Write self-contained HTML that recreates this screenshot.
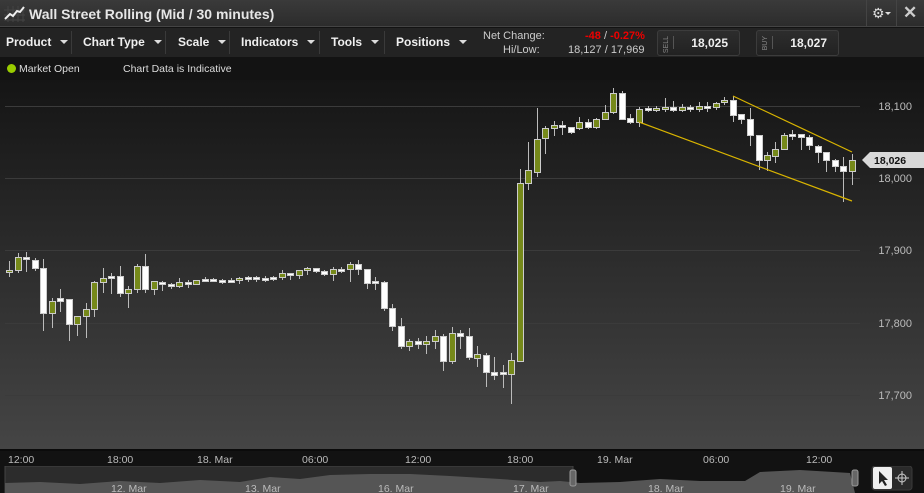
<!DOCTYPE html>
<html><head><meta charset="utf-8">
<style>
*{margin:0;padding:0;box-sizing:border-box}
body{width:924px;height:493px;overflow:hidden;background:#131313;font-family:"Liberation Sans",Arial,sans-serif;position:relative}
.title{position:absolute;left:0;top:0;width:924px;height:27px;background:linear-gradient(#3a3a3a,#2c2c2c);border-bottom:1px solid #444}
.title .t{position:absolute;left:29px;top:6px;color:#e6e6e6;font-size:14px;font-weight:bold}
.menu{position:absolute;left:0;top:28px;width:924px;height:29px;background:#232323}
.mi{position:absolute;top:7px;color:#f0f0f0;font-size:12px;font-weight:bold}
.sep{position:absolute;top:3px;width:1px;height:23px;background:#3a3a3a}
.arr{display:inline-block;width:0;height:0;border-left:4px solid transparent;border-right:4px solid transparent;border-top:4px solid #ddd;margin-left:9px;vertical-align:2px}
.lbl{position:absolute;color:#ccc;font-size:11px}
.btn{position:absolute;top:30px;height:26px;border:1px solid #3c3c3c;border-radius:3px;background:linear-gradient(#2d2d2d,#222)}
.btn .s{position:absolute;left:5px;top:5px;color:#888;font-size:7px;writing-mode:vertical-rl;transform:rotate(180deg);letter-spacing:0px}
.btn .bar{position:absolute;left:15px;top:5px;width:1px;height:13px;background:#555}
.btn .v{position:absolute;right:11px;top:5px;color:#eee;font-size:12px;font-weight:bold}
.status{position:absolute;left:0;top:57px;width:924px;height:23px;background:#131313}
.chart{position:absolute;left:0;top:80px;width:924px;height:369px;background:linear-gradient(#151515,#454545)}
.xaxis{position:absolute;left:0;top:449px;width:924px;height:17px;background:#121212;border-top:2px solid #0b0b0b}
.xl{position:absolute;top:3px;color:#bbb;font-size:10.5px}
.nav{position:absolute;left:0;top:466px;width:924px;height:27px;background:#121212}
</style></head><body>
<div class="title">
<svg style="position:absolute;left:3px;top:5px" width="22" height="17"><g stroke="#444" stroke-width="1"><path d="M5 1V17M10 1V17M15 1V17M20 1V17M1 5H22M1 10H22M1 15H22"/></g><path d="M2 14L7 9L10 11L14 6L17 7L21 2" stroke="#eee" stroke-width="2" fill="none"/></svg>
<div class="t">Wall Street Rolling (Mid / 30 minutes)</div>
<div style="position:absolute;left:866px;top:0;width:1px;height:27px;background:#444"></div>
<div style="position:absolute;left:896px;top:0;width:1px;height:27px;background:#444"></div>
<div style="position:absolute;left:872px;top:5px;color:#ddd;font-size:14px">⚙</div>
<div style="position:absolute;left:885px;top:12px;border-left:3px solid transparent;border-right:3px solid transparent;border-top:3px solid #ddd"></div>
<div style="position:absolute;left:903px;top:3px;color:#ccc;font-size:17px;font-weight:bold">✕</div>
</div>
<div class="menu">
<div class="mi" style="left:6px">Product<span class="arr"></span></div><div class="sep" style="left:71px"></div>
<div class="mi" style="left:83px">Chart Type<span class="arr"></span></div><div class="sep" style="left:165px"></div>
<div class="mi" style="left:178px">Scale<span class="arr"></span></div><div class="sep" style="left:229px"></div>
<div class="mi" style="left:241px">Indicators<span class="arr"></span></div><div class="sep" style="left:319px"></div>
<div class="mi" style="left:331px">Tools<span class="arr"></span></div><div class="sep" style="left:384px"></div>
<div class="mi" style="left:396px">Positions<span class="arr"></span></div>
<div class="lbl" style="left:483px;top:2px">Net Change:</div>
<div class="lbl" style="left:503px;top:16px">Hi/Low:</div>
<div class="lbl" style="left:585px;top:2px;color:#e00;font-weight:bold">-48 <span style="color:#ccc;font-weight:normal">/</span> -0.27%</div>
<div class="lbl" style="left:568px;top:16px">18,127 / 17,969</div>
</div>
<div class="btn" style="left:657px;width:83px"><span class="s">SELL</span><span class="bar"></span><span class="v">18,025</span></div>
<div class="btn" style="left:756px;width:83px"><span class="s">BUY</span><span class="bar"></span><span class="v">18,027</span></div>
<div class="status">
<div style="position:absolute;left:7px;top:7px;width:9px;height:9px;border-radius:50%;background:#9c0"></div>
<div style="position:absolute;left:19px;top:6px;color:#ddd;font-size:10.5px">Market Open</div>
<div style="position:absolute;left:123px;top:6px;color:#ddd;font-size:10.5px">Chart Data is Indicative</div>
</div>
<div class="chart"></div>
<svg id="c" style="position:absolute;left:0;top:0" width="924" height="449"></svg>
<div class="xaxis">
<span class="xl" style="left:8px">12:00</span><span class="xl" style="left:107px">18:00</span><span class="xl" style="left:197px">18. Mar</span><span class="xl" style="left:302px">06:00</span><span class="xl" style="left:405px">12:00</span><span class="xl" style="left:507px">18:00</span><span class="xl" style="left:597px">19. Mar</span><span class="xl" style="left:703px">06:00</span><span class="xl" style="left:806px">12:00</span>
</div>
<div class="nav">
<svg width="924" height="27" style="position:absolute;left:0;top:0">
<rect x="5" y="0" width="568" height="27" fill="#2c2c2c" stroke="#444"/>
<path d="M5 27V17L40 16L80 18L120 15L160 17L200 14L240 16L270 11L300 13L330 9L370 8L410 8L450 10L500 13L540 16L560 15L580 17L620 16L660 13L700 15L745 15L760 6L800 4L850 7L855 27Z" fill="#555"/>
<g fill="#666" stroke="#999"><rect x="570" y="4" width="6" height="16" rx="2"/><rect x="852" y="4" width="6" height="16" rx="2"/></g>
<g font-size="10.5" fill="#bbb" font-family="Liberation Sans,sans-serif"><text x="111" y="26">12. Mar</text><text x="245" y="26">13. Mar</text><text x="378" y="26">16. Mar</text><text x="513" y="26">17. Mar</text><text x="648" y="26">18. Mar</text><text x="780" y="26">19. Mar</text></g>
<rect x="872" y="0" width="40" height="24" rx="3" fill="#2a2a2a" stroke="#3a3a3a"/>
<rect x="873" y="1" width="19" height="22" rx="2" fill="#eee"/>
<path d="M879 5L879 18L882 15L885 20L887 19L884 14L888 14Z" fill="#222"/>
<g stroke="#ccc" fill="none"><circle cx="902" cy="12" r="4"/><path d="M902 5V19M895 12H909"/></g>
</svg>
</div>
<script>
var s=document.getElementById('c'),h='';
[106,178,250,323,395].forEach(function(y){h+='<rect x="5" y="'+y+'" width="855" height="1" fill="#3b3b3b"/>';});
[['18,100',106],['18,000',178],['17,900',250],['17,800',323],['17,700',395]].forEach(function(a){h+='<text x="912" y="'+(a[1]+4)+'" text-anchor="end" font-size="11" fill="#bbb" font-family="Liberation Sans,sans-serif">'+a[0]+'</text>';});
var c=[[9,261,277,270,272,1],[18,253,273,257,270,1],[26,252,272,257,259,0],[35,258,271,260,268,0],[43,259,331,268,313,0],[52,298,328,301,313,1],[60,289,312,298,301,0],[69,299,341,299,324,0],[77,316,336,316,324,1],[86,303,338,309,316,1],[94,281,317,282,309,1],[103,268,293,278,282,1],[111,273,294,276,278,0],[120,266,297,276,293,0],[128,286,308,289,293,1],[137,264,293,266,289,1],[145,254,293,266,289,0],[154,281,295,281,289,1],[162,281,291,282,284,0],[171,283,289,284,286,0],[179,278,288,282,286,1],[188,280,288,282,284,0],[196,280,284,280,284,1],[205,277,281,279,281,0],[213,278,282,279,281,0],[222,279,284,280,281,0],[231,278,283,280,281,0],[239,277,284,278,280,1],[248,276,282,277,279,0],[256,276,282,277,279,0],[265,276,282,278,279,0],[273,276,281,277,279,0],[282,270,280,273,277,1],[290,273,280,273,275,0],[299,270,279,270,275,1],[307,267,275,268,270,1],[316,268,273,268,271,0],[324,270,276,271,274,0],[333,267,281,269,274,1],[341,267,273,269,270,0],[350,262,282,264,269,1],[358,260,275,264,269,0],[367,269,289,269,283,0],[375,277,290,281,283,0],[384,281,311,282,308,0],[392,304,331,308,326,0],[401,318,349,326,346,0],[409,339,351,341,346,1],[418,338,349,341,344,0],[426,336,354,341,344,1],[435,330,349,336,341,1],[443,334,371,336,361,0],[452,327,364,333,361,1],[460,330,349,333,336,0],[469,328,360,336,357,0],[477,346,367,354,358,1],[486,353,387,355,372,0],[494,357,380,372,375,0],[503,365,388,372,374,0],[511,353,404,360,374,1],[520,169,361,183,361,1],[528,142,190,170,183,1],[537,108,177,139,172,1],[545,126,154,128,138,1],[554,121,136,125,128,1],[562,121,135,125,127,0],[571,127,134,127,132,0],[579,117,130,122,128,1],[588,119,129,122,127,0],[596,118,129,119,127,1],[605,105,119,112,119,1],[613,88,114,93,112,1],[622,91,120,93,119,0],[630,114,124,118,122,0],[639,107,127,109,122,1],[648,106,112,108,110,0],[656,106,112,108,110,1],[665,98,112,107,109,1],[673,101,112,107,110,0],[682,104,112,107,110,1],[690,105,112,107,109,0],[699,102,112,106,109,1],[707,102,112,106,108,0],[716,102,110,103,107,1],[724,97,105,100,102,1],[733,96,122,100,115,0],[741,114,124,114,119,0],[750,108,146,119,135,0],[759,135,170,135,160,0],[767,152,171,155,160,1],[775,142,163,149,156,1],[784,133,150,135,149,1],[792,130,140,134,136,0],[801,134,150,134,137,0],[809,135,150,137,145,0],[818,145,163,146,152,0],[826,152,172,152,160,0],[835,159,172,160,166,0],[843,157,202,166,171,0],[852,154,185,160,171,1]];
c.forEach(function(d){h+='<line x1="'+(d[0]+.5)+'" y1="'+d[1]+'" x2="'+(d[0]+.5)+'" y2="'+d[2]+'" stroke="#bbb" stroke-width="1"/>';var bh=Math.max(d[4]-d[3],2);h+='<rect x="'+(d[0]-2.5)+'" y="'+(d[3]+.5)+'" width="6" height="'+bh+'" fill="'+(d[5]?'#76891a':'#fff')+'" stroke="#ccc" stroke-width="1"/>';});
h+='<line x1="733" y1="96" x2="852" y2="152" stroke="#d9b400" stroke-width="1.2"/><line x1="639" y1="122" x2="852" y2="201" stroke="#d9b400" stroke-width="1.2"/>';
h+='<path d="M862 160L870 152H924V168H870Z" fill="#d8d8d8"/><text x="874" y="164" font-size="10.5" font-weight="bold" fill="#111" font-family="Liberation Sans,sans-serif">18,026</text>';
s.innerHTML=h;
</script>
</body></html>
